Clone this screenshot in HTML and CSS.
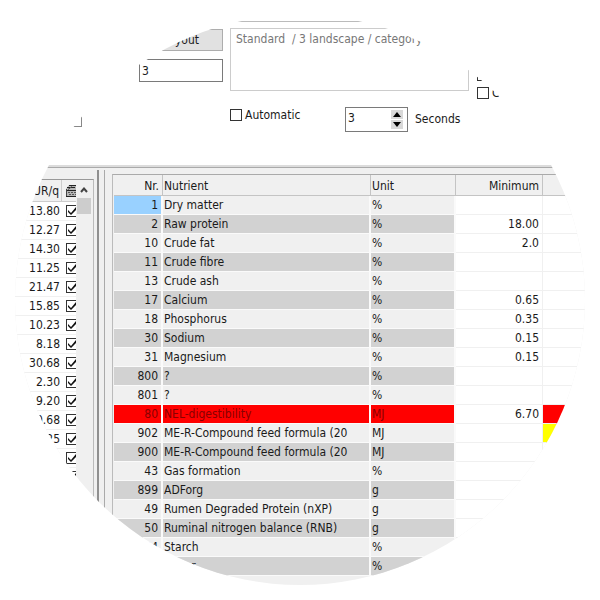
FILE: index.html
```
<!DOCTYPE html>
<html lang="en">
<head>
    <meta charset="UTF-8">
    <meta name="viewport" content="width=device-width, initial-scale=1.0">
    <title>Feed Formula - Nutrients</title>
    <link rel="stylesheet" href="styles.css">
</head>
<body>
    <main class="window">
        <section class="options">
            <div class="group-box"></div>
            <div class="layout-col">
                <button type="button" class="layout-btn">Layout</button>
                <input type="text" class="layout-nr" value="3" aria-label="Layout number">
            </div>
            <div class="preset-col">
                <textarea class="preset" aria-label="Preset" readonly>Standard  / 3 landscape / category</textarea>
                <div class="auto-row">
                    <label class="check"><input type="checkbox"> Automatic</label>
                    <input type="text" class="spin-value" id="seconds" value="3">
                    <div class="spin-buttons">
                        <button type="button" aria-label="Up"><svg viewBox="0 0 8 5"><path d="M4 0 L8 5 H0 Z"/></svg></button>
                        <button type="button" aria-label="Down"><svg viewBox="0 0 8 5"><path d="M0 0 H8 L4 5 Z"/></svg></button>
                    </div>
                    <label for="seconds">Seconds</label>
                </div>
            </div>
            <div class="flags-col">
                <label class="check"><input type="checkbox"> List</label>
                <label class="check"><input type="checkbox"> Comp</label>
            </div>
        </section>

        <div class="panels">
            <section class="prices">
                <table>
                    <thead>
                        <tr>
                            <th>EUR/q</th>
                            <th class="tick">
                                <svg class="calc" viewBox="0 0 10 13">
                                    <path d="M0 5 L3 1 H10 V12 H0 Z" fill="#b5b5b5"/>
                                    <path d="M3 1.5 H10 M1 3.5 H4 M5 3.5 H9 M0 6.5 H10 M0 12.5 H10" stroke="#222" fill="none"/>
                                    <path d="M0.5 5 V12 M2 5.5 L6 2.5" stroke="#444" fill="none"/>
                                    <path d="M2 8.5 H10 M3 10.5 H10" stroke="#555" stroke-dasharray="2 1"/>
                                </svg>
                            </th>
                        </tr>
                    </thead>
                    <tbody id="price-rows"></tbody>
                </table>
                <div class="scrollbar">
                    <svg viewBox="0 0 8 6"><path d="M1 5 L4 1.5 L7 5" fill="none" stroke="#444" stroke-width="2"/></svg>
                    <div class="thumb"></div>
                </div>
            </section>
            <div class="splitter"></div>
            <section class="nutrients">
                <table>
                    <colgroup>
                        <col class="col-nr"><col class="col-name"><col class="col-unit"><col class="col-min"><col>
                    </colgroup>
                    <thead>
                        <tr><th class="num">Nr.</th><th>Nutrient</th><th>Unit</th><th class="num">Minimum</th><th></th></tr>
                    </thead>
                    <tbody id="nutrient-rows"></tbody>
                </table>
            </section>
        </div>
    </main>
    <script src="script.js"></script>
</body>
</html>
```
FILE: styles.css
```
* {
    box-sizing: border-box;
}
body {
    margin: 0;
    background: #fff;
    color: #1a1a1a;
    font: 12px/18px "DejaVu Sans Condensed", "DejaVu Sans", sans-serif;
    font-stretch: condensed;
}
input, button, textarea {
    font: inherit;
    color: inherit;
    margin: 0;
    border-radius: 0;
}
.window {
    height: 100vh;
    overflow: hidden;
    display: flex;
    flex-direction: column;
    clip-path: circle(47.5%);
}

/* top options */
.options {
    flex: none;
    display: flex;
    padding: 21px 0 33px;
}
.group-box {
    width: 82px;
    height: 106px;
    border-right: 1px solid #888;
    border-bottom: 1px solid #888;
}
.layout-col {
    width: 141px;
    padding: 8px 0 0 57px;
    display: flex;
    flex-direction: column;
    gap: 8px;
}
.layout-btn {
    height: 22px;
    padding: 0 23px 0 0;
    background: #e1e1e1;
    border: 1px solid #adadad;
    text-align: right;
    line-height: 20px;
}
.layout-nr {
    width: 100%;
    height: 23px;
    border: 1px solid #7a7a7a;
    padding: 0 2px;
}
.preset-col {
    width: 239px;
    margin-left: 7px;
    border-top: 1px solid #bbb;
    padding-top: 6px;
}
.preset {
    display: block;
    width: 100%;
    height: 63px;
    resize: none;
    overflow: hidden;
    border: 1px solid #ccc;
    padding: 1px 5px;
    color: #777;
    background: #fff;
    white-space: pre;
}
.auto-row {
    display: flex;
    align-items: center;
    margin-top: 15px;
}
.check {
    display: flex;
    align-items: center;
    gap: 3px;
    white-space: nowrap;
}
.check input, .tick input {
    appearance: none;
    width: 12px;
    height: 12px;
    border: 1px solid #333;
    background: #fff;
}
.auto-row .check {
    width: 115px;
    margin-bottom: 8px;
    flex: none;
}
.spin-value {
    width: 46px;
    height: 25px;
    flex: none;
    border: 1px solid #7a7a7a;
    border-right: 0;
    padding: 0 2px 2px;
}
.spin-buttons {
    height: 25px;
    width: 17px;
    flex: none;
    border: 1px solid #7a7a7a;
    border-left: 0;
    padding: 2px 4px 2px 0;
    margin-right: 7px;
    display: flex;
    flex-direction: column;
    gap: 1px;
}
.spin-buttons button {
    flex: 1;
    padding: 0;
    border: 0;
    background: #d9d9d9;
    display: flex;
    align-items: center;
    justify-content: center;
}
.spin-buttons svg {
    width: 8px;
    height: 5px;
}
.flags-col {
    padding: 45px 0 0 8px;
}

/* panels */
.panels {
    flex: 1;
    min-height: 0;
    display: flex;
    background: #f0f0f0;
    border-top: 2px solid #dcdcdc;
    box-shadow: inset 0 1px #aaa;
}
table {
    border-collapse: separate;
    border-spacing: 0;
    table-layout: fixed;
    width: 100%;
}
th, td {
    height: 19px;
    padding: 0;
    font-weight: normal;
    text-align: left;
    white-space: nowrap;
    overflow: hidden;
    line-height: 18px;
}
.prices {
    width: 94px;
    margin-top: 12px;
    border-top: 1px solid #999;
    border-right: 1px solid #bbb;
    display: flex;
    align-items: flex-start;
}
.prices table {
    width: 76px;
    flex: none;
}
.prices th {
    height: 22px;
    border-right: 1px solid #ccc;
    border-bottom: 1px solid #ccc;
}
.prices th, .prices td {
    text-align: right;
    padding-right: 2px;
}
.prices td {
    background: #fff;
    border-bottom: 1px solid #f0f0f0;
}
.prices .tick {
    width: 14px;
    padding: 0;
    border-right: 0;
}
.tick input {
    display: block;
    margin-left: 4px;
    border-right: 0;
    width: 10px;
}
.tick input:checked::before {
    content: "";
    display: block;
    width: 9px;
    height: 10px;
    background: #111;
    clip-path: polygon(1px 4px, 4px 7px, 9px 1px, 9px 4px, 4px 9px, 1px 6px);
}
.calc {
    display: block;
    width: 10px;
    height: 13px;
    margin-left: 4px;
}
.scrollbar {
    width: 15px;
    margin-left: 1px;
    padding-top: 7px;
}
.scrollbar svg {
    display: block;
    width: 8px;
    height: 6px;
    margin: 0 0 5px 3px;
}
.thumb {
    width: 14px;
    height: 16px;
    background: #cdcdcd;
}
.splitter {
    width: 8px;
    margin: 3px 7px 0 3px;
    border-right: 1px solid #aaa;
    border-left: 2px solid #909090;
}
.nutrients {
    flex: 1;
    margin-top: 7px;
    border-top: 1px solid #aaa;
    border-left: 1px solid #bbb;
    padding-left: 1px;
}
.col-nr { width: 49px; }
.col-name { width: 208px; }
.col-unit { width: 85px; }
.col-min { width: 87px; }
.nutrients th {
    height: 21px;
    border-right: 1px solid #c4c4c4;
    border-bottom: 1px solid #c4c4c4;
    padding: 2px 2px 0 1px;
}
.nutrients td {
    padding: 0 2px 0 1px;
    border-right: 2px solid #fafafa;
    border-bottom: 1px solid #fafafa;
}
.nutrients .num {
    text-align: right;
    padding-right: 3px;
}
.nutrients tr:nth-child(even) td {
    background: #d2d2d2;
}
.nutrients tr.selected td:first-child {
    background: #99d1ff;
}
.nutrients tbody tr.alert td {
    background: #f00;
    color: #800;
}
.nutrients tbody tr td.value, .nutrients tbody tr td.rest {
    background: #fff;
    color: #1a1a1a;
    border-right: 1px solid #f0f0f0;
    border-bottom: 1px solid #f0f0f0;
}
.nutrients tbody tr.alert td.rest {
    background: #f00;
}
.nutrients tbody tr.warn td.rest {
    background: #ff0;
}
```
FILE: script.js
```
const prices = ['13.80', '12.27', '14.30', '11.25', '21.47', '15.85', '10.23', '8.18',
    '30.68', '2.30', '9.20', '0.68', '0.25', '', '', '', '', '', '', ''];

const nutrients = [
    [1, 'Dry matter', '%', '', 'selected'],
    [2, 'Raw protein', '%', '18.00'],
    [10, 'Crude fat', '%', '2.0'],
    [11, 'Crude fibre', '%', ''],
    [13, 'Crude ash', '%', ''],
    [17, 'Calcium', '%', '0.65'],
    [18, 'Phosphorus', '%', '0.35'],
    [30, 'Sodium', '%', '0.15'],
    [31, 'Magnesium', '%', '0.15'],
    [800, '?', '%', ''],
    [801, '?', '%', ''],
    [80, 'NEL-digestibility', 'MJ', '6.70', 'alert'],
    [902, 'ME-R-Compound feed formula (20', 'MJ', '', 'warn'],
    [900, 'ME-R-Compound feed formula (20', 'MJ', ''],
    [43, 'Gas formation', '%', ''],
    [899, 'ADForg', 'g', ''],
    [49, 'Rumen Degraded Protein (nXP)', 'g', ''],
    [50, 'Ruminal nitrogen balance (RNB)', 'g', ''],
    [44, 'Starch', '%', ''],
    [45, 'Sugar', '%', '']
];

document.getElementById('price-rows').innerHTML = prices.map(p =>
    `<tr><td>${p}</td><td class="tick"><input type="checkbox" checked aria-label="Use ${p}"></td></tr>`
).join('');

document.getElementById('nutrient-rows').innerHTML = nutrients.map(([nr, name, unit, min, state]) =>
    `<tr class="${state || ''}"><td class="num">${nr}</td><td>${name}</td><td>${unit}</td><td class="num value">${min}</td><td class="rest"></td></tr>`
).join('');
```
